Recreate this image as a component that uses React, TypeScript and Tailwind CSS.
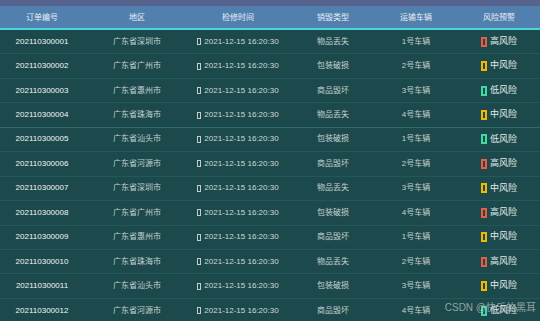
import React from "react";

type Row = { id: string; region: string; type: string; car: string; risk: "高" | "中" | "低" };

const rows: Row[] = [
  { id: "202110300001", region: "广东省深圳市", type: "物品丢失", car: "1号车辆", risk: "高" },
  { id: "202110300002", region: "广东省广州市", type: "包装破损", car: "2号车辆", risk: "中" },
  { id: "202110300003", region: "广东省惠州市", type: "商品毁坏", car: "3号车辆", risk: "低" },
  { id: "202110300004", region: "广东省珠海市", type: "物品丢失", car: "4号车辆", risk: "中" },
  { id: "202110300005", region: "广东省汕头市", type: "包装破损", car: "1号车辆", risk: "低" },
  { id: "202110300006", region: "广东省河源市", type: "商品毁坏", car: "2号车辆", risk: "高" },
  { id: "202110300007", region: "广东省深圳市", type: "物品丢失", car: "3号车辆", risk: "中" },
  { id: "202110300008", region: "广东省广州市", type: "包装破损", car: "4号车辆", risk: "高" },
  { id: "202110300009", region: "广东省惠州市", type: "商品毁坏", car: "1号车辆", risk: "中" },
  { id: "202110300010", region: "广东省珠海市", type: "物品丢失", car: "2号车辆", risk: "高" },
  { id: "202110300011", region: "广东省汕头市", type: "包装破损", car: "3号车辆", risk: "中" },
  { id: "202110300012", region: "广东省河源市", type: "商品毁坏", car: "4号车辆", risk: "低" },
];

const riskBox: Record<string, string> = {
  高: "border-[#ef5a45]",
  中: "border-[#f5b800]",
  低: "border-[#40d9a4]",
};

const grid = "grid grid-cols-[84px_106px_96px_94px_72px_88px]";

export default function App() {
  return (
    <div
      className="relative w-[540px] h-[321px] overflow-hidden bg-[#1c4a4c] text-[8px]"
      style={{ fontFamily: '"Liberation Sans", "Noto Sans CJK SC", sans-serif' }}
    >
      <div className="h-[6px] bg-[#56638f]" />
      <div className={`${grid} h-[22px] items-center bg-[#5280ae] text-[#e6eef6] pt-[2px]`}>
        <div className="text-center">订单编号</div>
        <div className="text-center">地区</div>
        <div className="text-center">检修时间</div>
        <div className="text-center">销毁类型</div>
        <div className="text-center">运输车辆</div>
        <div className="text-center pl-[6px]">风险预警</div>
      </div>
      <div className="h-[2px] bg-[#4ad6d9]" />
      {rows.map((r, i) => (
        <div
          key={r.id}
          className={`${grid} h-[24.45px] items-center border-b ${
            i === 3 ? "border-[#2f6b6c]" : "border-[#22585a]"
          }`}
        >
          <div className="text-center text-[#f2f5f5]">{r.id}</div>
          <div className="text-center text-[#c5d0d0]">{r.region}</div>
          <div className="flex items-center justify-center gap-[3px] text-[#cfd8d8]">
            <span className="inline-block w-[4px] h-[7px] border border-[#c5cccc]" />
            <span>2021-12-15 16:20:30</span>
          </div>
          <div className="text-center text-[#c5d0d0]">{r.type}</div>
          <div className="text-center text-[#c5d0d0]">{r.car}</div>
          <div className="flex items-center justify-center gap-[3px] pl-[6px] text-[#e4eaea]">
            <span className={`inline-block w-[6px] h-[10px] border-2 ${riskBox[r.risk]}`} />
            <span className="text-[9px]">{r.risk}风险</span>
          </div>
        </div>
      ))}
      <div className="absolute right-[4px] bottom-[8px] text-[10px] text-[#c8cccc]/70 leading-none">
        CSDN @快乐的黑耳
      </div>
    </div>
  );
}
